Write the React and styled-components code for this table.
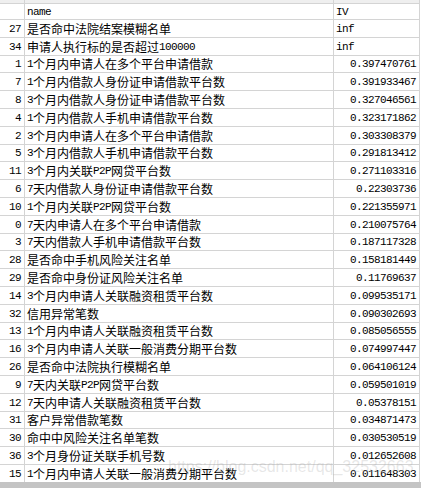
import React from "react";
import styled, { createGlobalStyle } from "styled-components";

const GlobalStyle = createGlobalStyle`
  html, body { margin: 0; padding: 0; background: #fff; }
  #root { width: 421px; height: 488px; overflow: hidden; }
`;

const rows = [
  [27, "是否命中法院结案模糊名单", "inf"],
  [34, "申请人执行标的是否超过100000", "inf"],
  [1, "1个月内申请人在多个平台申请借款", "0.397470761"],
  [7, "1个月内借款人身份证申请借款平台数", "0.391933467"],
  [8, "3个月内借款人身份证申请借款平台数", "0.327046561"],
  [4, "1个月内借款人手机申请借款平台数", "0.323171862"],
  [2, "3个月内申请人在多个平台申请借款", "0.303308379"],
  [5, "3个月内借款人手机申请借款平台数", "0.291813412"],
  [11, "3个月内关联P2P网贷平台数", "0.271103316"],
  [6, "7天内借款人身份证申请借款平台数", "0.22303736"],
  [10, "1个月内关联P2P网贷平台数", "0.221355971"],
  [0, "7天内申请人在多个平台申请借款", "0.210075764"],
  [3, "7天内借款人手机申请借款平台数", "0.187117328"],
  [28, "是否命中手机风险关注名单", "0.158181449"],
  [29, "是否命中身份证风险关注名单", "0.11769637"],
  [14, "3个月内申请人关联融资租赁平台数", "0.099535171"],
  [32, "信用异常笔数", "0.090302693"],
  [13, "1个月内申请人关联融资租赁平台数", "0.085056555"],
  [16, "3个月内申请人关联一般消费分期平台数", "0.074997447"],
  [26, "是否命中法院执行模糊名单", "0.064106124"],
  [9, "7天内关联P2P网贷平台数", "0.059501019"],
  [12, "7天内申请人关联融资租赁平台数", "0.05378151"],
  [31, "客户异常借款笔数", "0.034871473"],
  [30, "命中中风险关注名单笔数", "0.030530519"],
  [36, "3个月身份证关联手机号数", "0.012652608"],
  [15, "1个月内申请人关联一般消费分期平台数", "0.011648303"],
];

const Page = styled.div`
  position: relative;
  width: 421px;
  height: 488px;
  display: flex;
  flex-direction: column;
  background: #fff;
`;

const Sheet = styled.div`
  display: grid;
  grid-template-columns: 24px 308px 85px;
  grid-template-rows: 3px 15px repeat(${rows.length}, 16.8px);
  gap: 1px;
  width: 419px;
  background: #d4d4d4;
  border-right: 1px solid #d4d4d4;
`;

const Strip = styled.div`
  background: #efefef;
  border-bottom: 0;
`;

const Cell = styled.div`
  background: #fff;
  display: flex;
  align-items: ${(p) => (p.$head ? "flex-end" : "center")};
  justify-content: ${(p) => (p.$right ? "flex-end" : "flex-start")};
  padding: ${(p) => (p.$head ? "0 3px 0 2px" : "1px 3px 0 2px")};
  color: #000;
  white-space: nowrap;
  overflow: hidden;
  font-family: "Noto Sans CJK SC", "Liberation Sans", sans-serif;
  font-size: 12px;
  line-height: 14px;
`;

const Latin = styled.span`
  font-family: "Liberation Mono", monospace;
  font-size: 11px;
  letter-spacing: -0.6px;
`;

const BottomBar = styled.div`
  flex: 1;
  background: #c4c4c4;
`;

const Watermark = styled.div`
  position: absolute;
  left: 168px;
  top: 458px;
  font-family: "Liberation Sans", sans-serif;
  font-size: 16px;
  color: rgba(170, 170, 170, 0.28);
  pointer-events: none;
  white-space: nowrap;
`;

const Mixed = ({ text }) =>
  text
    .split(/([\x00-\x7f]+)/)
    .filter(Boolean)
    .map((part, i) =>
      /^[\x00-\x7f]+$/.test(part) ? <Latin key={i}>{part}</Latin> : <span key={i}>{part}</span>
    );

export default function App() {
  return (
    <Page>
      <GlobalStyle />
      <Sheet>
        <Strip />
        <Strip />
        <Strip />
        <Cell $head />
        <Cell $head>
          <Latin>name</Latin>
        </Cell>
        <Cell $head>
          <Latin>IV</Latin>
        </Cell>
        {rows.map(([idx, name, iv]) => (
          <React.Fragment key={idx}>
            <Cell $right>
              <Latin>{idx}</Latin>
            </Cell>
            <Cell>
              <Mixed text={name} />
            </Cell>
            <Cell $right={iv !== "inf"}>
              <Latin>{iv}</Latin>
            </Cell>
          </React.Fragment>
        ))}
      </Sheet>
      <BottomBar />
      <Watermark>https://blog.csdn.net/qq_32532663</Watermark>
    </Page>
  );
}
